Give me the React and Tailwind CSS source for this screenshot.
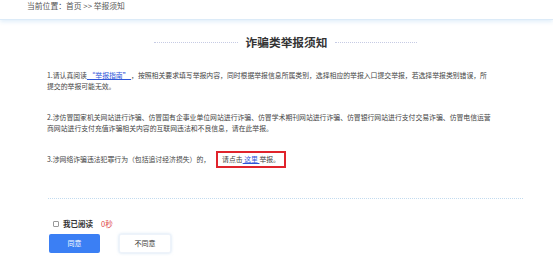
import React from "react";

const font = { fontFamily: '"Noto Sans CJK SC", "Noto Sans", sans-serif' };

const App = () => {
  return (
    <div
      className="w-[553px] h-[258px] bg-white overflow-hidden text-[#444]"
      style={font}
    >
      {/* Header / breadcrumb */}
      <div className="h-[20px] border-b border-[#dcebf8] shadow-[0_2px_4px_rgba(190,220,245,0.45)]">
        <div className="pl-[27px] text-[7.8px] leading-[12px] text-[#555]">
          当前位置：首页 &gt;&gt; 举报须知
        </div>
      </div>

      <div className="ml-[48px] w-[475px]">
        {/* Title */}
        <div className="mt-[16px] flex items-center justify-center gap-[8px]">
          <div className="w-[84px] border-t border-dotted border-[#c6cbe4]" />
          <h1 className="text-[11.7px] leading-[12px] font-bold text-[#333]">
            诈骗类举报须知
          </h1>
          <div className="w-[82px] border-t border-dotted border-[#c6cbe4]" />
        </div>

        {/* Content */}
        <div className="-ml-px w-[446px] text-[6.85px] leading-[11px] text-[#444]">
          <p className="mt-[22px]">
            1.请认真阅读
            <a className="text-[#2f56d8] underline">{"\u00a0“举报指南”\u00a0"}</a>
            ，按照相关要求填写举报内容，同时根据举报信息所属类别，选择相应的举报入口提交举报，若选择举报类别错误，所提交的举报可能无效。
          </p>
          <p className="mt-[20px]">
            2.涉仿冒国家机关网站进行诈骗、仿冒国有企事业单位网站进行诈骗、仿冒学术期刊网站进行诈骗、仿冒银行网站进行支付交易诈骗、仿冒电信运营商网站进行支付充值诈骗相关内容的互联网违法和不良信息，请在此举报。
          </p>
          <p className="mt-[17px]">
            3.涉网络诈骗违法犯罪行为（包括追讨经济损失）的，
            <span className="ml-[6px] inline-block border-2 border-[#e0242c] px-[4px] leading-[13px]">
              请点击
              <a className="text-[#2f56d8] underline">{"\u00a0这里\u00a0"}</a>
              举报。
            </span>
          </p>
        </div>

        {/* Divider */}
        <div className="mt-[30px] border-t border-dotted border-[#c2dbef]" />

        {/* Read confirmation */}
        <div className="mt-[20px] flex items-center pl-[5px] text-[7.5px] leading-[10px]">
          <span className="w-[6px] h-[6px] border border-[#999] rounded-[1px] bg-white" />
          <span className="ml-[4px] font-semibold text-[#333]">我已阅读</span>
          <span className="ml-[8px] text-[#e04848]">0秒</span>
        </div>

        {/* Buttons */}
        <div className="mt-[5px] flex items-center gap-[19px] pl-px">
          <button className="w-[51px] h-[19px] rounded-[2px] bg-[#3b7ff4] text-white text-[7px]">
            同意
          </button>
          <button className="w-[52px] h-[19px] rounded-[2px] bg-white text-[#333] text-[7px] border border-[#eef3fa] shadow-[0_0_3px_rgba(150,190,230,0.5)]">
            不同意
          </button>
        </div>
      </div>
    </div>
  );
};

export default App;
